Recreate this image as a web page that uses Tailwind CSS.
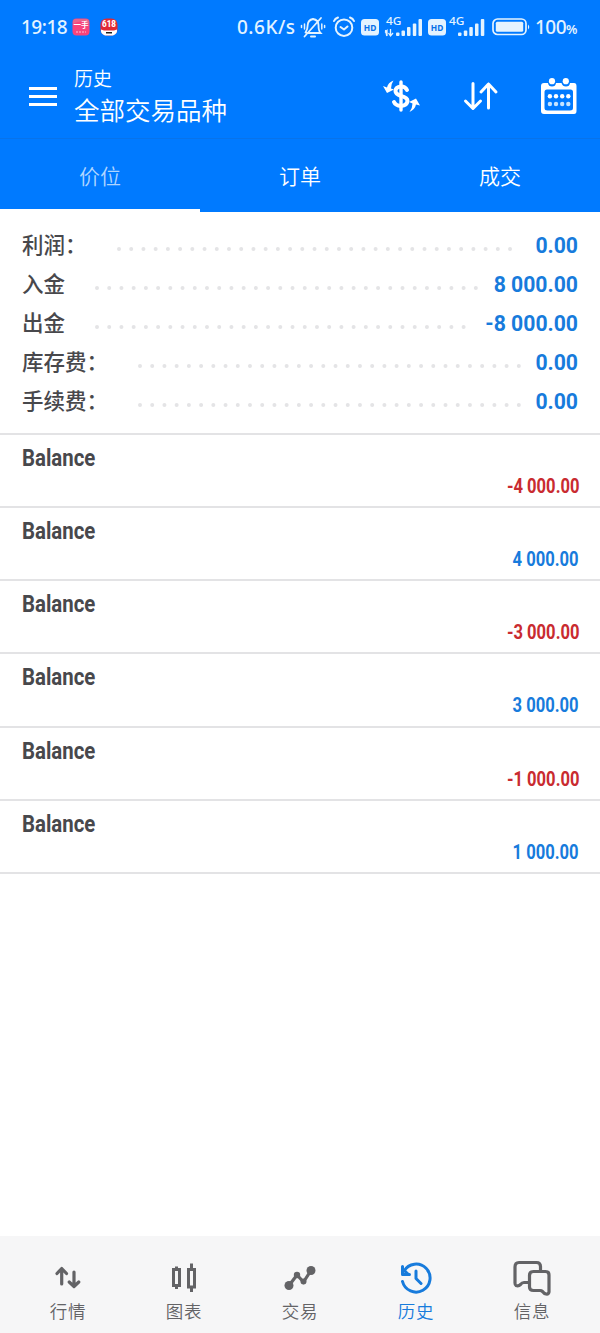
<!DOCTYPE html>
<html lang="zh-CN">
<head>
<meta charset="utf-8">
<title>历史</title>
<script src="https://cdn.jsdelivr.net/npm/@tailwindcss/browser@4"></script>
</head>
<body class="w-[600px] h-[1333px] bg-white overflow-hidden flex flex-col font-['Roboto','Noto_Sans_CJK_SC',sans-serif]">
<header class="bg-[#007aff] text-white h-[212px] shrink-0 flex flex-col">
  <div class="h-[54px] flex items-center pl-[21px] text-[#e4f3ff] font-['Noto_Sans',sans-serif] font-medium text-[19px] leading-none whitespace-nowrap">
    <span class="w-[51px] tracking-[-0.5px]">19:18</span>
    <svg class="shrink-0 w-[18px] h-[18px]" viewBox="0 0 18 18"><rect x=".5" y=".5" width="17" height="17" rx="4" fill="#f8437c"/><path d="M1 4Q1 1 4 1H14Q17 1 17 4V6Q8 1 1 6Z" fill="#e8648c"/><text x="1.5" y="10" font-size="7.500" font-weight="700" fill="#fff" font-family="Noto Sans CJK SC">一手</text><path d="M4 14H14" stroke="#ffc0d4" stroke-dasharray="2 1"/></svg>
    <svg class="shrink-0 ml-[10px] w-[18px] h-[18px]" viewBox="0 0 18 18"><rect x=".5" y=".5" width="17" height="17" rx="6" fill="#e02a35"/><text x="2" y="9.300" font-size="9" font-weight="800" fill="#fff" font-family="Roboto" textLength="14" lengthAdjust="spacingAndGlyphs">618</text><path d="M1 11.500L4 12.500H14L17 11.500Q17.500 16 13 17.500H5Q.5 16 1 11.500Z" fill="#fff"/><path d="M6 14H12V15.500H6Z" fill="#222"/></svg>
    <span class="ml-[119px] w-[63px] tracking-[0.5px]">0.6K/s</span>
    <svg class="shrink-0 w-[26px] h-[24px]" viewBox="0 0 26 24" fill="none" stroke="#e4f3ff" stroke-width="1.8" stroke-linecap="round"><path d="M7 18H20.5Q18.500 16 18.500 10Q18.500 5 13 4Q8 5 7.700 10Q7.700 14.500 5.500 17.500M4.500 21.500L21 3"/><path d="M11 21.500H15" stroke-width="2"/><path d="M4.500 9V14M1.500 10.500V12.500M21.800 9V14M24.600 10.500V12.500" stroke-width="1.5"/></svg>
    <svg class="shrink-0 ml-[6px] w-[24px] h-[24px]" viewBox="0 0 24 24" fill="none" stroke="#e4f3ff" stroke-width="2" stroke-linecap="round" stroke-linejoin="round"><circle cx="12" cy="12.700" r="8.300"/><path d="M8.500 12L12 14.500L15.500 11.500M2 6Q3 3.500 6 2.500M18 2.500Q21 3.500 22 6"/></svg>
    <svg class="shrink-0 ml-[5px] w-[18px] h-[17px]" viewBox="0 0 18 17"><rect width="18" height="16.500" rx="3.500" fill="#e4f3ff"/><text x="2.800" y="11.600" font-size="9" font-weight="700" fill="#0870e8" font-family="Noto Sans" textLength="12.500" lengthAdjust="spacingAndGlyphs">HD</text></svg>
    <svg class="shrink-0 ml-[6px] w-[38px] h-[26px] overflow-visible" viewBox="0 -1 38 26" fill="#e4f3ff"><text x="1" y="9.800" font-size="11.500" font-family="Noto Sans" textLength="15.500" lengthAdjust="spacingAndGlyphs">4G</text><path d="M.5 15L1.800 21M0 17.500L2 15.500V21M5.500 14V20.500M3.500 18L5.500 21L8 18" fill="none" stroke="#e4f3ff" stroke-width="1.300"/><rect x="11" y="17.500" width="3.500" height="3.500" rx="1"/><rect x="16.500" y="15.500" width="3.500" height="5.500" rx="1"/><rect x="22" y="12" width="3.500" height="9" rx="1"/><rect x="27.800" y="8.500" width="3.500" height="12.500" rx="1"/><rect x="33.500" y="4" width="3.500" height="17" rx="1"/></svg>
    <svg class="shrink-0 ml-[5px] w-[18px] h-[17px]" viewBox="0 0 18 17"><rect width="18" height="16.500" rx="3.500" fill="#e4f3ff"/><text x="2.800" y="11.600" font-size="9" font-weight="700" fill="#0870e8" font-family="Noto Sans" textLength="12.500" lengthAdjust="spacingAndGlyphs">HD</text></svg>
    <svg class="shrink-0 ml-[3px] w-[38px] h-[26px] overflow-visible" viewBox="0 -1 38 26" fill="#e4f3ff"><text x="0" y="9.800" font-size="11.500" font-family="Noto Sans" textLength="15.500" lengthAdjust="spacingAndGlyphs">4G</text><rect x="9" y="17.500" width="3.500" height="3.500" rx="1"/><rect x="14.800" y="15.500" width="3.500" height="5.500" rx="1"/><rect x="20.300" y="12" width="3.500" height="9" rx="1"/><rect x="26" y="8.500" width="3.500" height="12.500" rx="1"/><rect x="31.800" y="4" width="3.500" height="17" rx="1"/></svg>
    <svg class="shrink-0 ml-[5px] w-[39px] h-[18px]" viewBox="0 0 39 18"><rect x="1" y="1" width="33" height="15.500" rx="4.500" fill="none" stroke="#e4f3ff" stroke-width="1.700"/><rect x="3.800" y="3.800" width="27.400" height="9.900" rx="1.500" fill="#e4f3ff"/><path d="M36 6.500Q38.500 9 36 11.500Z" fill="#e4f3ff"/></svg>
    <span class="ml-[4px] tracking-[-0.5px]">100<span class="text-[13px] font-semibold">%</span></span>
  </div>
  <div class="h-[85px] flex items-center border-b border-[#0873ea]">
    <svg class="shrink-0 ml-[29px] mt-px w-[28px] h-[20px]" viewBox="0 0 28 20"><path d="M0 1.500H28M0 9.500H28M0 17.500H28" stroke="#fff" stroke-width="3"/></svg>
    <div class="ml-[17px] mt-px flex flex-col w-[309px] font-[350]">
      <span class="text-[19px] leading-[28px]">历史</span>
      <span class="text-[25.500px] leading-[34px]">全部交易品种</span>
    </div>
    <svg class="shrink-0 w-[37px] h-[34px]" viewBox="0 0 37 34" fill="none" stroke="#fff" stroke-width="4" stroke-linecap="round"><path d="M18 3V31" stroke-width="3.400"/><path d="M24 11Q22.500 7.500 18 7.500Q12.500 8 12.500 12Q12.500 15 18 17Q24.500 18.500 24.500 22Q24 26.500 18 27Q12.500 26.500 11 23"/><path d="M10.500 1.500Q5 3.500 4 8.500L0 7L4 14L11 10.500L8 9.500Q8 5 10.500 1.500ZM26.500 33Q32 30.500 33 25.500L37 26.500L33 19.500L26 23L29.500 24.500Q29.500 29 26.500 33Z" fill="#fff" stroke="none"/></svg>
    <svg class="shrink-0 ml-[43px] w-[36px] h-[30px]" viewBox="0 0 36 30" fill="none" stroke="#fff" stroke-width="3" stroke-linecap="round" stroke-linejoin="round"><path d="M10 2.500V27M2.500 20L10 27.500L17.500 20M25.500 27V3M18 11L25.500 3L33 11"/></svg>
    <svg class="shrink-0 ml-[42px] -mt-px w-[36px] h-[36px] overflow-visible" viewBox="0 0 36 36"><path fill="#fff" fill-rule="evenodd" d="M3 5H7Q7.500 8.500 11 8.500Q14.500 8.500 15 5H20.500Q21.500 8.500 25 8.500Q28.500 8.500 29 5H33Q35.500 5 35.500 8V33Q35.500 36 33 36H3Q0 36 0 33V8Q0 5 3 5ZM6 11.500Q3.500 11.500 3.500 14V30Q3.500 32.500 6.500 32.500H29Q32 32.500 32 30V14Q32 11.500 29.500 11.500Z"/><g fill="#fff"><circle cx="11" cy="3.200" r="3.100"/><circle cx="24.800" cy="3.200" r="3.100"/><circle cx="8.900" cy="18.200" r="2.200"/><circle cx="15" cy="18.200" r="2.200"/><circle cx="21.200" cy="18.200" r="2.200"/><circle cx="27.300" cy="18.200" r="2.200"/></g><g fill="#c5e4ff"><circle cx="8.900" cy="26" r="2.200"/><circle cx="15" cy="26" r="2.200"/><circle cx="21.200" cy="26" r="2.200"/><circle cx="27.300" cy="26" r="2.200"/></g></svg>
  </div>
  <nav class="h-[73px] grid grid-cols-3 text-[21px] font-[350] text-center leading-[76px]">
    <span class="h-[73px] border-b-[3px] border-white text-[#b0d5ff]">价位</span><span class="h-[73px]">订单</span><span class="h-[73px]">成交</span>
  </nav>
</header>
<section class="h-[222.500px] shrink-0 pt-[14px] pl-[22px] pr-[22px] border-b-2 border-[#e3e3e5] text-[21.500px] font-medium text-[#48484c]">
  <div class="h-[39px] flex items-center"><span class="w-[95px] mt-px">利润：</span><svg class="mt-[7px] w-[400px] h-[4px]"><path d="M2 2H396" stroke="#e4e4e6" stroke-width="4" stroke-linecap="round" stroke-dasharray="0 12.220"/></svg><b class="ml-auto text-[21.200px] font-bold text-[#177bdc]">0.00</b></div>
  <div class="h-[39px] flex items-center"><span class="w-[73px] mt-px">入金</span><svg class="mt-[7px] w-[384px] h-[4px]"><path d="M2 2H383" stroke="#e4e4e6" stroke-width="4" stroke-linecap="round" stroke-dasharray="0 12.220"/></svg><b class="ml-auto text-[21.200px] font-bold text-[#177bdc]">8 000.00</b></div>
  <div class="h-[39px] flex items-center"><span class="w-[73px] mt-px">出金</span><svg class="mt-[7px] w-[372px] h-[4px]"><path d="M2 2H370" stroke="#e4e4e6" stroke-width="4" stroke-linecap="round" stroke-dasharray="0 12.220"/></svg><b class="ml-auto text-[21.200px] font-bold text-[#177bdc]">-8 000.00</b></div>
  <div class="h-[39px] flex items-center"><span class="w-[116px] mt-px">库存费：</span><svg class="mt-[7px] w-[384px] h-[4px]"><path d="M2 2H383" stroke="#e4e4e6" stroke-width="4" stroke-linecap="round" stroke-dasharray="0 12.220"/></svg><b class="ml-auto text-[21.200px] font-bold text-[#177bdc]">0.00</b></div>
  <div class="h-[39px] flex items-center"><span class="w-[116px] mt-px">手续费：</span><svg class="mt-[7px] w-[384px] h-[4px]"><path d="M2 2H383" stroke="#e4e4e6" stroke-width="4" stroke-linecap="round" stroke-dasharray="0 12.220"/></svg><b class="ml-auto text-[21.200px] font-bold text-[#177bdc]">0.00</b></div>
</section>
<main class="grow font-bold">
  <div class="h-[73.330px] border-b-2 border-[#e3e3e5] pl-[22px] pr-[21px] pt-[8px] flex flex-col"><span class="h-[28px] self-start origin-left scale-x-[.84] text-[24.300px] leading-[30px] text-[#48484c]">Balance</span><span class="self-end origin-right scale-x-[.83] text-[20px] leading-[31px] text-[#c92b30]">-4 000.00</span></div>
  <div class="h-[73.330px] border-b-2 border-[#e3e3e5] pl-[22px] pr-[21px] pt-[8px] flex flex-col"><span class="h-[28px] self-start origin-left scale-x-[.84] text-[24.300px] leading-[30px] text-[#48484c]">Balance</span><span class="self-end origin-right scale-x-[.83] text-[20px] leading-[31px] text-[#177bdc]">4 000.00</span></div>
  <div class="h-[73.330px] border-b-2 border-[#e3e3e5] pl-[22px] pr-[21px] pt-[8px] flex flex-col"><span class="h-[28px] self-start origin-left scale-x-[.84] text-[24.300px] leading-[30px] text-[#48484c]">Balance</span><span class="self-end origin-right scale-x-[.83] text-[20px] leading-[31px] text-[#c92b30]">-3 000.00</span></div>
  <div class="h-[73.330px] border-b-2 border-[#e3e3e5] pl-[22px] pr-[21px] pt-[8px] flex flex-col"><span class="h-[28px] self-start origin-left scale-x-[.84] text-[24.300px] leading-[30px] text-[#48484c]">Balance</span><span class="self-end origin-right scale-x-[.83] text-[20px] leading-[31px] text-[#177bdc]">3 000.00</span></div>
  <div class="h-[73.330px] border-b-2 border-[#e3e3e5] pl-[22px] pr-[21px] pt-[8px] flex flex-col"><span class="h-[28px] self-start origin-left scale-x-[.84] text-[24.300px] leading-[30px] text-[#48484c]">Balance</span><span class="self-end origin-right scale-x-[.83] text-[20px] leading-[31px] text-[#c92b30]">-1 000.00</span></div>
  <div class="h-[73.330px] border-b-2 border-[#e3e3e5] pl-[22px] pr-[21px] pt-[8px] flex flex-col"><span class="h-[28px] self-start origin-left scale-x-[.84] text-[24.300px] leading-[30px] text-[#48484c]">Balance</span><span class="self-end origin-right scale-x-[.83] text-[20px] leading-[31px] text-[#177bdc]">1 000.00</span></div>
</main>
<footer class="h-[97px] shrink-0 bg-[#f6f6f7] px-[10px] pt-[22px] grid grid-cols-5 text-[17.500px] tracking-[0.8px] font-[350] leading-[28px] text-[#636366]">
  <div class="flex flex-col items-center"><svg class="w-[40px] h-[40px]" viewBox="0 0 40 40" fill="none" stroke="#636366" stroke-width="3.200" stroke-linecap="round" stroke-linejoin="round"><path d="M13.700 26V11M9 15.500L13.700 10.500L18.500 15.500M26 14V28M21.200 24L26 28.500L30.800 24"/></svg><span>行情</span></div>
  <div class="flex flex-col items-center"><svg class="w-[40px] h-[40px]" viewBox="0 0 40 40" fill="none" stroke="#636366" stroke-width="3"><path d="M9.500 11.500H15.500V27.500H9.500ZM12.500 8.500V11.500M12.500 27.500V31M24.500 11.500H30.500V29H24.500ZM27.500 5.500V11.500M27.500 29V34"/></svg><span>图表</span></div>
  <div class="flex flex-col items-center"><svg class="w-[40px] h-[40px]" viewBox="0 0 40 40"><path d="M9 27.500L17 17L23.500 24L31 12.500" fill="none" stroke="#636366" stroke-width="3.200"/><g fill="#636366"><circle cx="9" cy="27.500" r="4.500"/><circle cx="17" cy="17" r="3.200"/><circle cx="23.500" cy="23.500" r="3"/><circle cx="31" cy="12.500" r="4.500"/></g></svg><span>交易</span></div>
  <div class="flex flex-col items-center text-[#177bdc]"><svg class="w-[40px] h-[40px]" viewBox="0 0 40 40" fill="none" stroke="#177bdc" stroke-width="3" stroke-linecap="round" stroke-linejoin="round"><path d="M6.500 23.500A14 14 0 1 0 8 13M6.500 8.500V16.500H13.500M6.500 11L12 16M20 13V20.500L25 25.500"/></svg><span>历史</span></div>
  <div class="flex flex-col items-center"><svg class="w-[40px] h-[40px]" viewBox="0 0 40 40" fill="none" stroke="#636366" stroke-width="3.200" stroke-linejoin="round" stroke-linecap="round"><path d="M16 24.500H12Q10 24.500 8.500 26.500Q6.500 28.500 4 27.500Q3 27 3 25V9Q3 4.500 7 4.500H24.500Q28.500 4.500 28.500 8.500V13"/><path d="M21.500 13.500H33.500Q37 13.500 37 17V34Q36.500 36.500 34 36Q32 35.500 30.500 33.500Q29.500 32.500 28 32.500H21.500Q17.500 32.500 17.500 29V17.500Q17.500 13.500 21.500 13.500Z"/></svg><span>信息</span></div>
</footer>
</body>
</html>
